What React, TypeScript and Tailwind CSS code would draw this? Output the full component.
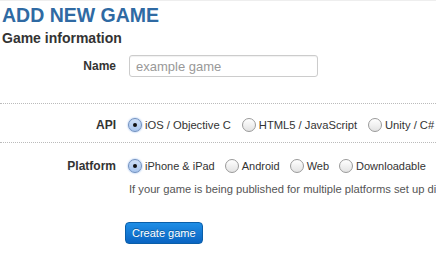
import React from "react";

function Radio({ checked }: { checked?: boolean }) {
  return (
    <span
      className={
        "relative inline-flex h-[14px] w-[14px] shrink-0 items-center justify-center rounded-full border " +
        (checked
          ? "border-[#6f8fbf] bg-gradient-to-b from-[#cfe0f7] to-[#a9c6ee] shadow-[0_0_2px_#7aa7e8]"
          : "border-[#9a9a9a] bg-gradient-to-b from-[#ffffff] to-[#e3e3e3]")
      }
    >
      {checked && <span className="h-[4px] w-[4px] rounded-full bg-[#111]" />}
    </span>
  );
}

function Opt({ label, checked }: { label: string; checked?: boolean }) {
  return (
    <label className="flex items-center gap-[3px] whitespace-nowrap">
      <Radio checked={checked} />
      <span>{label}</span>
    </label>
  );
}

export default function App() {
  return (
    <div
      className="h-[253px] w-[436px] overflow-hidden border-t border-[#eeeeee] bg-white text-[12px] text-[#333]"
      style={{ fontFamily: '"Liberation Sans", Arial, sans-serif' }}
    >
      <h1 className="ml-[2px] mt-[4px] whitespace-nowrap text-[19.5px] font-bold leading-[20px] text-[#2f6aa3]">
        ADD NEW GAME
      </h1>
      <h2 className="ml-[2px] mt-[4px] text-[14px] font-bold leading-[18px] text-[#333]">
        Game information
      </h2>
      <div className="mt-[8px] flex items-center">
        <div className="w-[116px] shrink-0 text-right text-[12px] font-bold">Name</div>
        <input
          className="ml-[13px] h-[22px] w-[189px] rounded-[3px] border border-[#cccccc] px-[6px] text-[13px] text-[#555] placeholder:text-[#999] shadow-[inset_0_1px_1px_rgba(0,0,0,0.06)]"
          placeholder="example game"
        />
      </div>
      <div className="mt-[26px] border-t border-dotted border-[#bbbbbb]" />
      <div className="mt-[14px] flex h-[14px] items-center leading-[14px]">
        <div className="w-[116px] shrink-0 text-right text-[12px] font-bold">API</div>
        <div className="ml-[12px] flex shrink-0 items-center gap-[11px] text-[11.2px]">
          <Opt label="iOS / Objective C" checked />
          <Opt label="HTML5 / JavaScript" />
          <Opt label="Unity / C#" />
        </div>
      </div>
      <div className="mt-[10px] border-t border-dotted border-[#bbbbbb]" />
      <div className="mt-[16px] flex h-[14px] items-center leading-[14px]">
        <div className="w-[116px] shrink-0 text-right text-[12px] font-bold">Platform</div>
        <div className="ml-[12px] flex shrink-0 items-center gap-[10px] text-[11px]">
          <Opt label="iPhone & iPad" checked />
          <Opt label="Android" />
          <Opt label="Web" />
          <Opt label="Downloadable" />
        </div>
      </div>
      <p className="ml-[129px] mt-[9px] whitespace-nowrap text-[11.2px] leading-[14px] text-[#555]">
        If your game is being published for multiple platforms set up different games for each platform.
      </p>
      <button className="ml-[125px] mt-[26px] h-[22px] rounded-[4px] border border-[#0a5ea8] bg-gradient-to-b from-[#1f8ee6] to-[#0a64c2] px-[6px] text-[11px] leading-[20px] text-white [text-shadow:0_-1px_0_rgba(0,0,0,0.3)]">
        Create game
      </button>
    </div>
  );
}
